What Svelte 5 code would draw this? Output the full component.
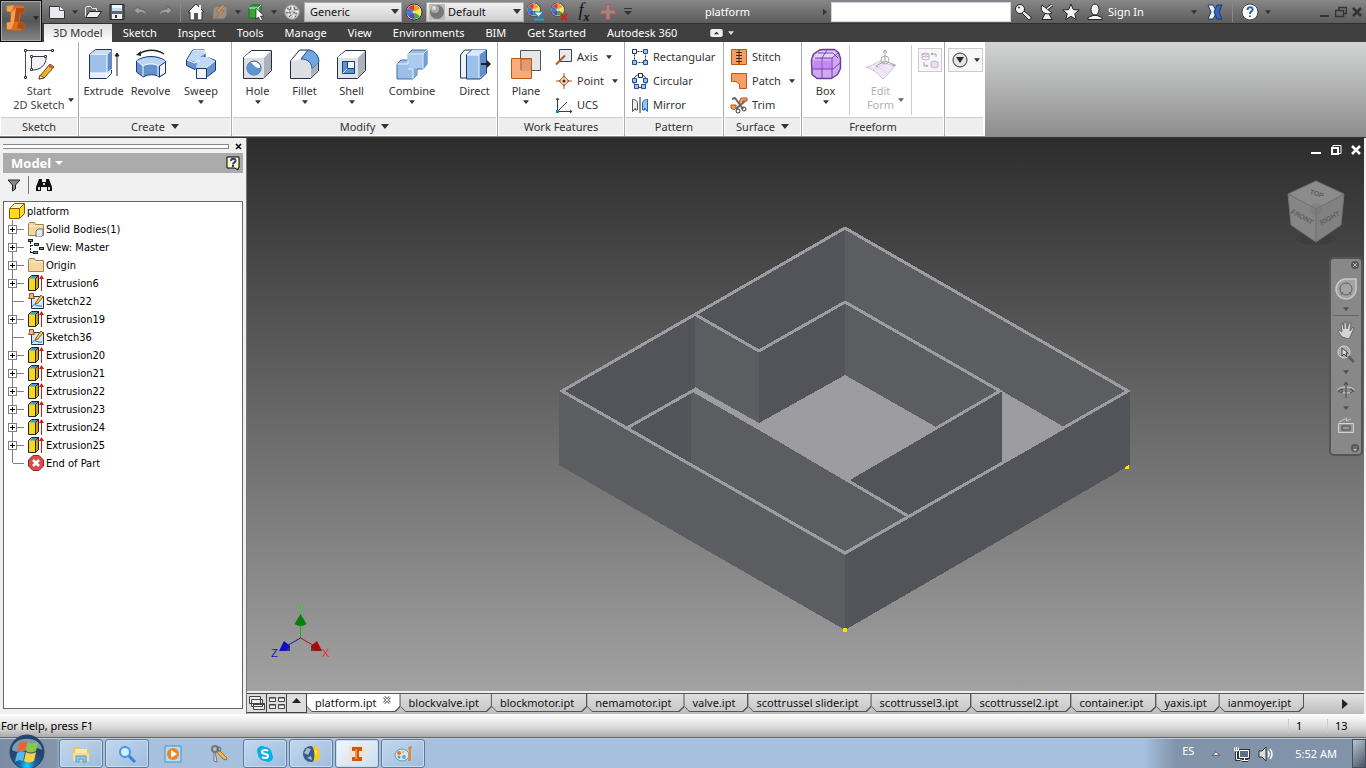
<script lang="ts">
  const menuTabs = ['3D Model', 'Sketch', 'Inspect', 'Tools', 'Manage', 'View', 'Environments', 'BIM', 'Get Started', 'Autodesk 360'];
  const documents = [
    'platform.ipt', 'blockvalve.ipt', 'blockmotor.ipt', 'nemamotor.ipt', 'valve.ipt', 'scottrussel slider.ipt',
    'scottrussel3.ipt', 'scottrussel2.ipt', 'container.ipt', 'yaxis.ipt', 'ianmoyer.ipt',
  ];
  const treeItems = [
    { icon: 'bodies', label: 'Solid Bodies(1)', expandable: true },
    { icon: 'views', label: 'View: Master', expandable: true },
    { icon: 'folder', label: 'Origin', expandable: true },
    { icon: 'extrusion', label: 'Extrusion6', expandable: true },
    { icon: 'sketchNode', label: 'Sketch22', expandable: false },
    { icon: 'extrusion', label: 'Extrusion19', expandable: true },
    { icon: 'sketchNode', label: 'Sketch36', expandable: false },
    { icon: 'extrusion', label: 'Extrusion20', expandable: true },
    { icon: 'extrusion', label: 'Extrusion21', expandable: true },
    { icon: 'extrusion', label: 'Extrusion22', expandable: true },
    { icon: 'extrusion', label: 'Extrusion23', expandable: true },
    { icon: 'extrusion', label: 'Extrusion24', expandable: true },
    { icon: 'extrusion', label: 'Extrusion25', expandable: true },
    { icon: 'end', label: 'End of Part', expandable: false },
  ];
  const tasks = [
    { icon: 'explorer', name: 'Explorer', open: true },
    { icon: 'search', name: 'Search', open: true },
    { icon: 'player', name: 'Media player', open: false },
    { icon: 'keys', name: 'Keys', open: false },
    { icon: 'skype', name: 'Skype', open: true },
    { icon: 'globe', name: 'Browser', open: true },
    { icon: 'inventor', name: 'Inventor', open: true },
    { icon: 'paint', name: 'Paint', open: true },
  ];

  let activeTab = $state('3D Model');
  let activeDocument = $state('platform.ipt');
</script>

{#snippet arrow(color = '#333')}
  <svg class="arrow" viewBox="0 0 8 5" width="6" height="4"><path d="M0 0h8L4 5z" fill={color} /></svg>
{/snippet}

{#snippet wheel()}
  <circle cx="9" cy="9" r="8" fill="#eee" stroke="#333" />
  <path d="M9 9V2a7 7 0 0 1 6 4z" fill="#f2a11d" /><path d="M9 9l6-3a7 7 0 0 1 0 7z" fill="#f4ec45" />
  <path d="M9 9l6 4a7 7 0 0 1-6 3z" fill="#44a943" /><path d="M9 9v7a7 7 0 0 1-6-4z" fill="#6648b5" />
  <path d="M9 9l-6 4a7 7 0 0 1 0-8z" fill="#397fce" /><path d="M9 9L3 5a7 7 0 0 1 6-3z" fill="#dc3c2d" />
  <circle cx="9" cy="9" r="1.500" fill="#ddd" />
{/snippet}

{#snippet small(name: string)}
  <svg class="icon" viewBox="0 0 18 18" width="18" height="18" fill="none" stroke-linejoin="round" aria-hidden="true">
    {#if name === 'new'}
      <path d="M1.500 3.500h10l5 4v8h-15z" fill="#e8e9ed" stroke="#333" /><path d="M11.500 3.500v4h5" fill="#fff" stroke="#555" />
    {:else if name === 'open'}
      <path d="M1.500 14.500V5l1-1.500h4l2 2h4v3" stroke="#ececec" /><path d="M1.500 14.500l4-6h12l-4 6z" fill="#eee" stroke="#222" />
    {:else if name === 'save'}
      <path d="M2 1.500h14v15H2z" fill="#5c6470" stroke="#222" /><path d="M4 2h10v6H4z" fill="#b9ddf1" /><path d="M4 2h10v3H4z" fill="#f4f8fb" /><path d="M4 11h10v5H4z" fill="#eee" /><path d="M7 12h2v3H7z" fill="#333" />
    {:else if name === 'undo'}
      <path d="M7 3L2 7.500 7 12V9.500c4-.5 7 1 8 4C15 8 11 6 7 6z" fill="#a0a0a0" stroke="#666" />
    {:else if name === 'redo'}
      <path d="M11 3l5 4.500-5 4.500V9.500c-4-.5-7 1-8 4C3 8 7 6 11 6z" fill="#a0a0a0" stroke="#666" />
    {:else if name === 'home'}
      <path d="M1 9L9 1l8 8h-2v8H3V9z" fill="#f8f8f8" stroke="#333" /><path d="M7 10h4v7H7z" fill="#555" /><path d="M13 2v4" stroke="#eee" stroke-width="2" />
    {:else if name === 'update'}
      <path d="M2 6l3-3h11v9l-3 4H2z" fill="#958f88" stroke="#77726c" /><path d="M11 2L5 9h4l-5 7 9-8H9l5-6z" fill="#cf9763" stroke="#9c6c45" stroke-width=".7" />
    {:else if name === 'select'}
      <path d="M2 5l3-3h9v10l-3 3H2z" fill="#36a438" stroke="#17711d" /><path d="M2 5h9v10M11 5l3-3" stroke="#dff5dc" /><path d="M9 5v11l2.500-2 2 4 2-1-2-4H17z" fill="#fff" stroke="#222" stroke-width=".7" />
    {:else if name === 'material'}
      <circle cx="9" cy="9" r="7.500" fill="#c9c9c9" stroke="#8d8d8d" /><path d="M4 5l3 2 1-3m3 0l1 3 3-1M3 10l4-1 1 4m2-4l4 2M6 14l2-2m3 3l2-2" stroke="#666" /><path d="M3 7l3 2m3-6l1 4m2 1l4 1M5 12l3-1m2 1l1 3" stroke="#fff" />
    {:else if name === 'wheel'}
      {@render wheel()}
    {:else if name === 'adjust'}
      <g transform="translate(-1 -1) scale(.85)">{@render wheel()}</g><path d="M7 9h9l-4.500 5z" fill="#fff" stroke="#198bd0" /><path d="M7 16.500h10" stroke="#23a4e5" stroke-width="2" />
    {:else if name === 'clear'}
      <g transform="translate(-1 -1) scale(.85)">{@render wheel()}</g><path d="M10 11l6 6m0-6l-6 6" stroke="#e11b14" stroke-width="2" />
    {:else if name === 'plus'}
      <path d="M7 1.500h4V7h5.500v4H11v5.500H7V11H1.500V7H7z" fill="#9d8581" stroke="#b05a4e" />
    {:else if name === 'key'}
      <path d="M7 9l8 8 2-1v-2L9 7z" fill="#eee" stroke="#222" /><circle cx="6" cy="6" r="4.500" fill="#f4f4f4" stroke="#222" /><circle cx="5" cy="4.500" r="1" fill="#333" />
    {:else if name === 'dish'}
      <path d="M8 9l-4 7.500h10L10 9" fill="#eee" stroke="#222" /><path d="M4 2c-3 6 3 11 10 8z" fill="#f4f4f4" stroke="#222" /><path d="M9 6l5-4" stroke="#222" stroke-width="3" /><path d="M9 6l5-4" stroke="#fff" stroke-width="1.500" />
    {:else if name === 'star'}
      <path d="M9 1l2.300 5.600 6 .4-4.600 3.800 1.600 5.800L9 13.300l-5.300 3.300 1.600-5.800L.7 7l6-.4z" fill="#f4f4f4" stroke="#222" />
    {:else if name === 'person'}
      <path d="M2 16.500v-2l5-2h4l5 2v2z" fill="#f4f4f4" stroke="#222" /><ellipse cx="9" cy="6.500" rx="4" ry="5.500" fill="#f4f4f4" stroke="#222" />
    {:else if name === 'exchange'}
      <path d="M2 2h5l4 7-4 7H2l3-7z" fill="#e8f0fc" stroke="#173a74" /><path d="M16 2h-5L8 9l3 7h5l-3-7z" fill="#3c64b2" stroke="#173a74" />
    {:else if name === 'help'}
      <circle cx="9" cy="9" r="8" fill="#fff" stroke="#444" /><path d="M6.500 7c0-4 6-3.500 5 0-.5 1.500-2.500 1.500-2.500 4M9 12.500V14" stroke="#1a65b5" stroke-width="2" />
    {:else if name === 'axis'}
      <path d="M4.500 1.500h12v12h-12z" fill="#e8e9ec" stroke="#3c4353" /><path d="M1 16.500l9-9" stroke="#a75e22" stroke-width="2" />
    {:else if name === 'point'}
      <path d="M9 4l5 5-5 5-5-5z" fill="#f9d1ab" stroke="#c2622a" /><path d="M9 1v5m0 6v5M1 9h5m6 0h5" stroke="#b34e1a" /><circle cx="9" cy="9" r="1.500" fill="#333" />
    {:else if name === 'ucs'}
      <path d="M2.500 2v13.500H17M1 4l1.500-2L4 4M15 14l2 1.500-2 1.500M3 15l9-9" stroke="#3b3f48" /><path d="M1 14h3v3H1z" fill="#1686c5" />
    {:else if name === 'rectangular'}
      <path d="M3.500 3.500h11v11h-11z" stroke="#333" stroke-dasharray="2 1" /><path d="M1.500 1.500h4v4h-4z" fill="#fff" stroke="#152e63" /><path d="M12.500 1.500h4v4h-4zM1.500 12.500h4v4h-4zM12.500 12.500h4v4h-4z" fill="#9fc5ef" stroke="#1c4b99" />
    {:else if name === 'circular'}
      <circle cx="9" cy="9" r="6.500" stroke="#333" /><path d="M7.500 1.500h4v4h-4z" fill="#fff" stroke="#152e63" /><path d="M1.500 6.500h4v4h-4zM12.500 6.500h4v4h-4zM3.500 12.500h4v4h-4zM10.500 12.500h4v4h-4z" fill="#9fc5ef" stroke="#1c4b99" />
    {:else if name === 'mirror'}
      <path d="M1.500 15.500v-12c3 0 5 1 5 4.500v6h-2v-2z" fill="#eee" stroke="#555" /><path d="M16.500 15.500v-12c-3 0-5 1-5 4.500v6h2v-2z" fill="#8fc6ee" stroke="#2365ac" /><path d="M9 1v16" stroke="#222" />
    {:else if name === 'stitch'}
      <path d="M1.500 1.500h15v15h-15z" fill="#f3a163" stroke="#bd561d" /><path d="M9 2v14M6 4.500h6m-6 3h6m-6 3h6m-6 3h6" stroke="#4b2b1d" />
    {:else if name === 'patch'}
      <path d="M1.500 1.500h15v15h-7V12L6 9.500H1.500z" fill="#f3a163" stroke="#bd561d" />
    {:else if name === 'trim'}
      <path d="M2 3l3-1 8 11M15 5L6 13" stroke="#666" stroke-width="2" /><path d="M9 6l2-4h6v3h-4l-2 4zM1 9h5v3l-2 2-3-2z" fill="#f0a067" stroke="#b55322" /><circle cx="8" cy="15" r="2" stroke="#333" /><circle cx="14" cy="13" r="2" stroke="#333" />
    {:else if name === 'convert'}
      <g opacity=".5"><path d="M1 3l3-1 4 1v5l-3 1-4-1zm0 0l4 1 3-1M1 5l4 1 3-1" stroke="#936fae" /><path d="M10 11l3-1 4 1v5l-3 1-4-1z" fill="#dcc8ed" stroke="#936fae" /><path d="M10 3h5v3m-5-3l2-1m-2 1l2 1M3 11v4h4m0 0l-2-1" stroke="#555" /></g>
    {:else if name === 'down'}
      <circle cx="9" cy="9" r="7" fill="#e4e5e6" stroke="#333" /><path d="M5 6h8l-4 6z" fill="#25272b" />
    {/if}
  </svg>
{/snippet}

{#snippet large(name: string)}
  <svg class="large-icon" viewBox="0 0 32 32" width="32" height="32" fill="none" stroke-linejoin="round" aria-hidden="true">
    {#if name === 'sketch'}
      <path d="M2.500 30V2.500H30" stroke="#4b4b4b" /><path d="M8.500 22V8.500H23c1 8-6 14-14 13.500" fill="#f2f3f5" stroke="#363c4d" />
      <path d="M1.500 1.500h2v2h-2zm27 0h2v2h-2zM1.500 28.500h2v2h-2zm6-21h2v2h-2zm14 0h2v2h-2zM7.500 20.500h2v2h-2z" fill="#fff" stroke="#34394a" /><path d="M17 28L27 16l4 3-10 11-5 1z" fill="#f4b322" stroke="#5f4a28" /><path d="M17 27l4 3-5 1z" fill="#ffe7c2" stroke="#5f4a28" /><path d="M27 16l4 3-2 2-4-3z" fill="#c7594a" />
    {:else if name === 'extrude'}
      <path d="M1.500 6.500l6-5h16v24l-5 5h-17z" fill="#e8eef8" stroke="#183566" /><path d="M2 7h17v18H2z" fill="#9dc1ea" /><path d="M19 7l5-5v19l-5 5z" fill="#5f8bc9" /><path d="M2 6l6-4h15l-4 4z" fill="#c8dcf3" /><path d="M2 25h17l5-4M19 6v24" stroke="#fff" /><path d="M29 28V6m-2 2l2-3 2 3z" fill="#222" stroke="#222" />
    {:else if name === 'revolve'}
      <path d="M4 6C11 1 22 1 29 6" stroke="#222" stroke-width="1.500" /><path d="M1 7l5-4v5z" fill="#222" /><path d="M1.500 13C9 7 23 7 30.500 13v12l-6 4c-4-3-12-3-16 0l-7-5z" fill="#6592cd" stroke="#173d7e" /><path d="M2 13C10 8 22 8 30 13l-7 5c-4-2-11-2-15 0z" fill="#bad5f4" /><path d="M2 13l6 5c4-3 12-3 15 0l7-5M8 18v10m15-10v10" stroke="#f4f9ff" /><path d="M24.500 18l6-4v11l-6 4z" fill="#f5f6f8" stroke="#173d7e" />
    {:else if name === 'sweep'}
      <path d="M1.500 12L8 1.500h11l1 4v4h3l7.500 3v10l-8 6H12v-9l-2 2-8.500-4z" fill="#6793cf" stroke="#183b78" /><path d="M2 12L8 2h11l1 4-5 3h8l7 4-9 7H11l1-5-4-2z" fill="#c0d9f5" /><path d="M2 12l8 3 2-2h3M8 2h11l1 4M21 20l9-7" stroke="#f4f8ff" /><path d="M11.500 20.500h10v10h-10z" fill="#f1f2f4" stroke="#183b78" />
    {:else if name === 'hole'}
      <path d="M1.500 9.500l8-7h20v20l-8 8h-20z" fill="#dedfe2" stroke="#202f4d" /><path d="M2 9l8-6h19l-7 7H2z" fill="#fff" /><path d="M22 10l7-7v19l-7 8z" fill="#adb0b6" /><circle cx="12" cy="20" r="7" fill="#fff" stroke="#1f4a8f" /><path d="M8 14c3 1 5 7 11 6-1 8-10 9-13 4-2-4-1-8 2-10z" fill="#5d93d3" />
    {:else if name === 'fillet'}
      <path d="M1.500 13l9-11h8c7 0 11 6 11 12v9l-8 7.500h-20z" fill="#dddfe3" stroke="#202f4d" /><path d="M2 13l9-10h7l-7 8-8 2z" fill="#fff" /><path d="M12 11l7-9c6 0 11 5 11 12l-7 7c0-6-4-10-11-10z" fill="#72a7e2" stroke="#1d57a2" /><path d="M22 22l7-7v7l-7 7z" fill="#aeb1b8" />
    {:else if name === 'shell'}
      <path d="M1.500 9.500l8-7h20v20l-8 8h-20z" fill="#e2e3e6" stroke="#202f4d" /><path d="M2 9l8-6h19l-7 7H2z" fill="#fff" /><path d="M22 10l7-7v19l-7 8z" fill="#aeb1b7" /><path d="M6.500 13.500h12v12h-12z" fill="#5c95d8" stroke="#173d7e" /><path d="M11.500 13.500h7v7h-7z" fill="#eff6ff" stroke="#173d7e" /><path d="M7 25l4-4" stroke="#fff" />
    {:else if name === 'combine'}
      <path d="M12 6l4-4h15v14l-4 5h-6v6l-4 4H1V16l4-4h7z" fill="#9dbfe5" stroke="#426fac" /><path d="M12 21h9v6l-4 4V21z" fill="#7ea9da" /><path d="M27 6l4-4v14l-4 5z" fill="#6f9fd5" /><path d="M12 6h15v15M27 6l4-4M1 16h11V6M12 21h5v10" stroke="#eaf3fd" /><path d="M13 7h13v13H13z" fill="#aacbf0" />
    {:else if name === 'direct'}
      <path d="M1.500 7l4-5h8v24l-5 4h-7z" fill="#f0f1f3" stroke="#233757" /><path d="M7.500 7l5-5h15v23l-6 6h-14z" fill="#9ac1ea" stroke="#183e80" /><path d="M20 7l7-5v23l-7 5z" fill="#638fcc" /><path d="M8 7l5-5h14l-7 5z" fill="#d8e8fb" /><path d="M20 7v23M8 7h12" stroke="#f4f9ff" /><path d="M22 15h6v-3l4 4-4 4v-3h-6z" fill="#222" />
    {:else if name === 'plane'}
      <path d="M10.500 2.500h20v20h-20z" fill="#e5e6e8" stroke="#4e535d" /><path d="M1.500 10.500h20v20h-20z" fill="#f9a267" fill-opacity=".9" stroke="#b8561b" /><path d="M11 11h10v11H11z" fill="#dc9c75" /><path d="M11 22V11h10" stroke="#a6653d" />
    {:else if name === 'box'}
      <path d="M1.500 12l2-6 6-4 4-.5h11l4 3 2 6v10l-3 6-6 4H7l-5-4z" fill="#d2a5f7" stroke="#644390" stroke-width="1.500" /><path d="M2 12l3-5 6-4h13l4 3-5 4H6z" fill="#e6cffb" /><path d="M4 13h7v8H3zm9 0h8v8h-8z" fill="#c388f5" /><path d="M17 2l-5 8v20M2 21h21l7-6M22 10v20M5 10h17l6-5M8 5h15l5 5" stroke="#714aa0" />
    {:else if name === 'form'}
      <g opacity=".4"><path d="M1 19c7-1 10-5 15-6 6 3 9 4 15 4-6 6-8 10-13 14-5-5-8-9-17-12z" fill="#dac3ef" stroke="#81669b" /><path d="M9 16l13 9M7 22l16-8" stroke="#b79ed0" /><path d="M20 14V2l-2 3m2-3l2 3M20 13l10 4-3 1M20 13l-9 5 2 1" stroke="#222" /><circle cx="20" cy="12" r="4" stroke="#333" /></g>
    {/if}
  </svg>
{/snippet}

{#snippet node(name: string)}
  <svg viewBox="0 0 16 16" width="16" height="16" fill="none" stroke-linejoin="round" aria-hidden="true">
    {#if name === 'part'}
      <path d="M.5 5.500l5-5h10v10l-5 5H.5z" fill="#ffdd18" stroke="#95500d" /><path d="M1.500 5L6 1h8.500L11 5z" fill="#fff7c0" /><path d="M10.500 15V5.500H1m9.500 0l5-5" stroke="#95500d" />
    {:else if name === 'bodies' || name === 'folder'}
      <path d="M.5 14.500v-12l1-1h5l1 2h8v11z" fill="#f4d69f" stroke="#a08252" /><path d="M1 5h14" stroke="#fff0cc" />
      {#if name === 'bodies'}
        <path d="M8 10l2-2h5v6l-2 2H8z" fill="#e5e8ee" stroke="#68717e" />
      {/if}
    {:else if name === 'views'}
      <path d="M2.500 3v11M3 6.500h4m-4 7h4" stroke="#222" stroke-dasharray="2 1" /><path d="M0 1.500h5M6 5.500h5M5 13.500h5M11 9.500h5" stroke="#222" stroke-width="3" /><path d="M1 1.500h3M7 5.500h3M6 13.500h3M12 9.500h3" stroke="#60a5cf" />
    {:else if name === 'extrusion'}
      <path d="M.5 3.500l3-3h7v12l-3 3h-7z" fill="#f7d91b" stroke="#222" /><path d="M1 3.500L4 1h6.500L8 3.500z" fill="#4a98d0" /><path d="M7.500 15.500v-12l3-3v12z" fill="#c9a016" stroke="#222" /><path d="M13 2h1v14h-1z" fill="#dc1717" /><path d="M11 4l2.500-4L16 4z" fill="#dc1717" />
    {:else if name === 'sketchNode'}
      <path d="M3.500 3.500h12v12h-12z" fill="#d8e7f4" stroke="#243349" /><path d="M1.500.5h4v3l1 2h-6l1-2z" fill="#f6b684" stroke="#9d4a23" /><path d="M8 9l5-7 2 2-5 6-3 1z" fill="#f6c842" stroke="#8a6420" /><path d="M4 14c2-5 5 0 10-1" stroke="#276eae" />
    {:else}
      <path d="M5 .5h6L15.500 5v6L11 15.500H5L.5 11V5z" fill="#de4b46" stroke="#76312d" /><path d="M5 5l6 6m0-6l-6 6" stroke="#fff" stroke-width="2.500" />
    {/if}
  </svg>
{/snippet}

{#snippet tool(icon: string, label: string, width: string, menu = false)}
  <button class="tool {width}">{@render large(icon)}<span>{label}</span>{#if menu}{@render arrow()}{/if}</button>
{/snippet}

{#snippet command(icon: string, label: string, menu = false)}
  <button class="command">{@render small(icon)}<span>{label}</span>{#if menu}{@render arrow()}{/if}</button>
{/snippet}

<div class="desktop">
  <header class="app-header">
    <button class="app-button" aria-label="Application menu">
      <svg viewBox="0 0 24 30" width="22" height="28"><path d="M2 2l8-1 11 1v7l-4 1-1 9 5 1v8l-10 1-9-1v-8l4-1V9L2 8z" fill="#d96c1f" /><path d="M2 2l8-1-3 7H2zM7 9l5-5-1 15H6zM2 20l8-1-3 8H2z" fill="#f4a04c" /><path d="M12 4h9v5l-5 1-1 9h-5zM15 19l6 1v8l-8-2z" fill="#b34b12" /></svg>
      {@render arrow('#222')}
    </button>
    <div class="title-bar">
      <button class="quick" aria-label="New">{@render small('new')}</button>
      <button class="more" aria-label="New options">{@render arrow()}</button>
      <button class="quick" aria-label="Open">{@render small('open')}</button>
      <button class="quick" aria-label="Save">{@render small('save')}</button>
      <button class="quick" aria-label="Undo">{@render small('undo')}</button>
      <button class="quick" aria-label="Redo">{@render small('redo')}</button>
      <span class="bar-divider"></span>
      <button class="quick" aria-label="Home">{@render small('home')}</button>
      <button class="quick" aria-label="Update">{@render small('update')}</button>
      <button class="more" aria-label="Update options">{@render arrow()}</button>
      <button class="quick" aria-label="Select">{@render small('select')}</button>
      <button class="more" aria-label="Select options">{@render arrow()}</button>
      <button class="quick" aria-label="Material">{@render small('material')}</button>
      <div class="dropdown">
        <select aria-label="Material name"><option>Generic</option></select>
        <svg viewBox="0 0 8 5" width="8" height="5"><path d="M0 0h8L4 5z" fill="#333" /></svg>
      </div>
      <button class="quick" aria-label="Appearance">{@render small('wheel')}</button>
      <div class="dropdown">
        <svg viewBox="0 0 16 16" width="16" height="16"><path d="M0 0h16v16H0z" fill="#bbb" /><circle cx="8" cy="8" r="7" fill="#777" /><circle cx="6" cy="5" r="4" fill="#aaa" /><circle cx="5" cy="4" r="2" fill="#ddd" /></svg>
        <select aria-label="Appearance name"><option>Default</option></select>
        <svg viewBox="0 0 8 5" width="8" height="5"><path d="M0 0h8L4 5z" fill="#333" /></svg>
      </div>
      <button class="quick" aria-label="Adjust appearance">{@render small('adjust')}</button>
      <button class="quick" aria-label="Clear appearance">{@render small('clear')}</button>
      <button class="quick formula" aria-label="Parameters"><i>f<sub>x</sub></i></button>
      <button class="quick" aria-label="Add">{@render small('plus')}</button>
      <button class="more last" aria-label="Customize"><svg viewBox="0 0 8 7" width="8" height="7"><path d="M0 0h8v1H0zM0 3h8L4 7z" fill="#333" /></svg></button>
      <span class="document-title">platform</span>
      <button class="more" aria-label="Expand search"><svg viewBox="0 0 5 8" width="4" height="8"><path d="M0 0v8l5-4z" fill="#333" /></svg></button>
      <input class="search" type="search" aria-label="Search help" />
      <button class="quick" aria-label="Subscription">{@render small('key')}</button>
      <button class="quick" aria-label="Communication">{@render small('dish')}</button>
      <button class="quick" aria-label="Favorites">{@render small('star')}</button>
      <button class="sign-in">{@render small('person')}<span>Sign In</span>{@render arrow()}</button>
      <button class="quick" aria-label="Exchange">{@render small('exchange')}</button>
      <span class="bar-divider spaced"></span>
      <button class="quick" aria-label="Help">{@render small('help')}</button>
      <button class="more" aria-label="Help options">{@render arrow()}</button>
      <div class="window-buttons">
        <button aria-label="Minimize"><svg viewBox="0 0 12 12" width="12" height="12"><path d="M1 9h9v2H1z" fill="#333" /></svg></button>
        <button aria-label="Restore"><svg viewBox="0 0 12 12" width="12" height="12" fill="none" stroke="#333"><path d="M4 4V1.500h7.500v6H9" stroke-width="1.500" /><path d="M.5 4.500h8v6h-8z" stroke-width="1.500" /></svg></button>
        <button aria-label="Close"><svg viewBox="0 0 12 12" width="12" height="12"><path d="M2 2l8 8m0-8l-8 8" stroke="#333" stroke-width="2.500" /></svg></button>
      </div>
    </div>
    <nav class="menu-tabs">
      {#each menuTabs as tab}
        <button class:active={activeTab === tab} onclick={() => (activeTab = tab)}>{tab}</button>
      {/each}
      <button class="collapse" aria-label="Collapse ribbon">
        <svg viewBox="0 0 14 9" width="13" height="8"><rect width="14" height="9" rx="2" fill="#eee" /><path d="M4 6h6L7 3z" fill="#333" /></svg>
        {@render arrow('#ddd')}
      </button>
    </nav>
  </header>

  <div class="ribbon">
    <section class="panel sketch-panel">
      <div class="panel-body">
        <button class="tool split">{@render large('sketch')}<span>Start<br />2D Sketch</span>{@render arrow()}</button>
      </div>
      <footer>Sketch</footer>
    </section>
    <section class="panel create-panel">
      <div class="panel-body">
        {@render tool('extrude', 'Extrude', 'medium')}
        {@render tool('revolve', 'Revolve', 'medium')}
        {@render tool('sweep', 'Sweep', 'wide', true)}
      </div>
      <footer>Create {@render arrow()}</footer>
    </section>
    <section class="panel modify-panel">
      <div class="panel-body">
        {@render tool('hole', 'Hole', 'medium', true)}
        {@render tool('fillet', 'Fillet', 'medium', true)}
        {@render tool('shell', 'Shell', 'medium', true)}
        {@render tool('combine', 'Combine', 'widest', true)}
        <span class="divider"></span>
        {@render tool('direct', 'Direct', 'medium')}
      </div>
      <footer>Modify {@render arrow()}</footer>
    </section>
    <section class="panel work-panel">
      <div class="panel-body">
        {@render tool('plane', 'Plane', 'wide', true)}
        <div class="commands">
          {@render command('axis', 'Axis', true)}
          {@render command('point', 'Point', true)}
          {@render command('ucs', 'UCS')}
        </div>
      </div>
      <footer>Work Features</footer>
    </section>
    <section class="panel pattern-panel">
      <div class="panel-body">
        <div class="commands inset">
          {@render command('rectangular', 'Rectangular')}
          {@render command('circular', 'Circular')}
          {@render command('mirror', 'Mirror')}
        </div>
      </div>
      <footer>Pattern</footer>
    </section>
    <section class="panel surface-panel">
      <div class="panel-body">
        <div class="commands inset">
          {@render command('stitch', 'Stitch')}
          {@render command('patch', 'Patch', true)}
          {@render command('trim', 'Trim')}
        </div>
      </div>
      <footer>Surface {@render arrow()}</footer>
    </section>
    <section class="panel freeform-panel">
      <div class="panel-body">
        {@render tool('box', 'Box', 'medium', true)}
        <span class="divider"></span>
        <button class="tool split" disabled>{@render large('form')}<span>Edit<br />Form</span>{@render arrow('#666')}</button>
        <span class="divider"></span>
        <button class="boxed" disabled aria-label="Convert">{@render small('convert')}</button>
      </div>
      <footer>Freeform</footer>
    </section>
    <section class="panel extra-panel">
      <div class="panel-body"><button class="boxed" aria-label="Panel display">{@render small('down')}{@render arrow()}</button></div>
      <footer></footer>
    </section>
  </div>

  <main class="workspace">
    <aside class="browser">
      <div class="grip"><span></span><button aria-label="Close browser"><svg viewBox="0 0 7 7" width="7" height="7"><path d="M1 1l5 5m0-5L1 6" stroke="#000" stroke-width="1.500" /></svg></button></div>
      <div class="browser-title">
        <button>Model <svg viewBox="0 0 8 4" width="8" height="4"><path d="M0 0h8L4 4z" fill="#fff" /></svg></button>
        <button aria-label="Browser help"><svg viewBox="0 0 14 15" width="14" height="15"><path d="M1 1h12v11h-1v2l-3-2H1z" fill="#fffbc0" stroke="#000" /><path d="M5 5c0-3 5-3 4.500 0C9 7 7 6.500 7 8.500M7 9v2" fill="none" stroke="#17429b" stroke-width="2" /></svg></button>
      </div>
      <div class="browser-tools">
        <button aria-label="Filter"><svg viewBox="0 0 14 13" width="14" height="13"><path d="M1 1h12L8.500 6v4l-3 2V6z" fill="#888" stroke="#222" /></svg></button>
        <span></span>
        <button aria-label="Find"><svg viewBox="0 0 16 14" width="16" height="14"><path d="M3 1h3v3h4V1h3l3 8v4h-5V9H5v4H0V9z" fill="#111" /><path d="M2 9h2v3H2zM12 9h2v3h-2zM7 5h2v2H7z" fill="#ddd" /></svg></button>
      </div>
      <ul class="tree">
        <li class="root">{@render node('part')}<span>platform</span></li>
        {#each treeItems as item, i}
          <li>
            <svg class="branch" viewBox="0 0 24 18" width="24" height="18" fill="none" shape-rendering="crispEdges">
              <path d="M8.500 0v{i === treeItems.length - 1 ? 9 : 18}M8.500 9.500H20" stroke="#808080" />
              {#if item.expandable}
                <path d="M4.500 5.500h8v8h-8z" fill="#fff" stroke="#808080" /><path d="M6 9.500h5M8.500 7v5" stroke="#000" />
              {/if}
            </svg>
            {@render node(item.icon)}
            <span>{item.label}</span>
          </li>
        {/each}
      </ul>
    </aside>

    <section class="document-area">
      <div class="canvas">
        <svg class="model" viewBox="247 138 1117 553" shape-rendering="crispEdges" role="img" aria-label="platform model">
          <path d="M559 391l286 164v75L559 465z" fill="#5c5d61" />
          <path d="M1130 391L845 555v75l285-165z" fill="#535459" />
          <path d="M845 228L562 391l283 163z" fill="#535459" />
          <path d="M845 228l283 163-64 37-62-37-157-89z" fill="#5c5d61" />
          <path d="M695 315l64 36v72l-64-35z" fill="#5c5d61" />
          <path d="M845 302l-86 49v72l86-48z" fill="#535459" />
          <path d="M845 302l155 89-64 37-91-53z" fill="#5c5d61" />
          <path d="M845 375l91 52-91 54-154-89 4-5 64 36z" fill="#9d9ca0" />
          <path d="M1002 391v73l62-37z" fill="#9d9ca0" />
          <path d="M1002 391v73l-94 53-61-37z" fill="#535459" />
          <path d="M627 428l64-37v74z" fill="#535459" />
          <path d="M691 391l217 125-63 38-154-89z" fill="#5c5d61" />
          <path d="M845 228l283 163-283 162-283-162zM696 315l63 36 86-49 155 89-153 89M627 428l67-38 214 126" fill="none" stroke="#9d9ca0" stroke-width="3" />
          <path d="M843 628h4v4h-4zM1125 467l4-2v4h-4z" fill="#ffe100" />
        </svg>

        <div class="view-buttons">
          <button aria-label="Minimize document"><svg viewBox="0 0 12 12" width="12" height="12"><path d="M1 8h10v2H1z" fill="#fff" /></svg></button>
          <button aria-label="Restore document"><svg viewBox="0 0 12 12" width="12" height="12" fill="none" stroke="#fff"><path d="M3 3V1.500h8v8H9" /><path d="M2 4h6v6H2z" stroke-width="2" /></svg></button>
          <button aria-label="Close document"><svg viewBox="0 0 12 12" width="12" height="12"><path d="M2 2l8 8m0-8l-8 8" stroke="#fff" stroke-width="2.500" /></svg></button>
        </div>

        <svg class="view-cube" viewBox="0 0 60 70" width="60" height="70">
          <ellipse cx="30" cy="61" rx="20" ry="6" fill="#222" opacity=".15" />
          <path d="M30 3l28 13-28 15L2 16z" fill="#8c8c8c" stroke="#727272" /><path d="M2 16l28 15v33L5 47z" fill="#868686" stroke="#727272" /><path d="M58 16L30 31v33l25-17z" fill="#818181" stroke="#727272" />
          <circle cx="30" cy="31" r="6" fill="#777" opacity=".5" />
          <g font-family="Liberation Sans, sans-serif" font-size="7" font-weight="bold" fill="#5f5f5f" text-anchor="middle"><text transform="translate(30 18) rotate(18)">TOP</text><text transform="translate(15 41) rotate(28)">FRONT</text><text transform="translate(45 42) rotate(-29)">RIGHT</text></g>
        </svg>

        <div class="nav-bar">
          <button class="corner" aria-label="Close navigation"><svg viewBox="0 0 8 8" width="8" height="8"><circle cx="4" cy="4" r="4" fill="#555" /><path d="M2 2l4 4m0-4L2 6" stroke="#bbb" /></svg></button>
          <button class="steering" aria-label="Steering wheel"><svg viewBox="0 0 22 22" width="22" height="22" fill="none" stroke="#c8c8c8"><path d="M11 1h10v10A10 10 0 1 1 11 1z" fill="#a3a3a3" stroke-width="1.500" /><circle cx="11" cy="11" r="6" stroke="#5f5f5f" /><path d="M6 17l2-3m8 3l-2-3" stroke="#5f5f5f" /></svg></button>
          {@render arrow('#4f4f4f')}
          <hr />
          <button aria-label="Pan"><svg viewBox="0 0 18 18" width="18" height="18"><path d="M5 16L1 10l1-1 3 2-1-8h2l1 5V1h2l1 7 2-6h2l-1 8 3-4 1 1-3 7-2 4z" fill="#d4d4d4" stroke="#555" stroke-width=".8" /></svg></button>
          <button aria-label="Zoom"><svg viewBox="0 0 18 18" width="18" height="18" fill="none"><path d="M11 11l6 6" stroke="#606060" stroke-width="3" /><circle cx="7" cy="7" r="6" fill="#aaa" stroke="#d3d3d3" /><path d="M5 3v8l2-2 3 3-1-4h2z" fill="#ddd" stroke="#444" /></svg></button>
          {@render arrow('#4f4f4f')}
          <button aria-label="Orbit"><svg viewBox="0 0 18 18" width="18" height="18" fill="none" stroke="#444"><ellipse cx="9" cy="9" rx="8" ry="3" stroke="#d0d0d0" /><path d="M9 17V1L7 4m2-3l2 3M1 10l4-2v4zm12-2l4 2-4 2" /></svg></button>
          {@render arrow('#4f4f4f')}
          <button aria-label="Look at"><svg viewBox="0 0 18 18" width="18" height="18" fill="none"><path d="M1.500 6.500h15v9h-15z" fill="#989898" stroke="#d3d3d3" /><path d="M5 9h8v4H5z" stroke="#444" /><path d="M2 5l8-4-1 3 5-2" stroke="#c4c4c4" /></svg></button>
          <button class="corner" aria-label="Navigation options"><svg viewBox="0 0 8 8" width="8" height="8"><circle cx="4" cy="4" r="4" fill="#555" /><path d="M2 3h4M2 5h4L4 7z" fill="#bbb" stroke="#bbb" stroke-width=".5" /></svg></button>
        </div>

        <svg class="triad" viewBox="0 0 62 56" width="62" height="56" font-family="Liberation Sans, sans-serif" font-size="11">
          <path d="M30.500 34V12" stroke="#11b711" /><path d="M30.500 34l-14 8" stroke="#1010d4" /><path d="M30.500 34l14 8" stroke="#b41010" />
          <path d="M30.500 10l6 10q-6 4-12 0z" fill="#087d0c" /><path d="M9 47l5-10 6 5v5z" fill="#1010c2" /><path d="M52 47l-5-10-6 5v5z" fill="#a90808" /><path d="M15 47l5-4v4z" fill="#283c65" /><path d="M41 47v-4l5 4z" fill="#6b3a1c" />
          <text x="27" y="9" fill="#28d228">Y</text><text x="1" y="53" fill="#1010d4">Z</text><text x="52" y="53" fill="#ef2a2a">X</text>
        </svg>
      </div>

      <div class="document-tabs">
        <button class="layout" aria-label="Cascade"><svg viewBox="0 0 16 16" width="16" height="16" fill="#eee" stroke="#444"><path d="M.5 1.500h11v7H.5zM2.500 4.500h11v7h-11zM4.500 8.500h11v6h-11z" /><path d="M4.500 9h11" stroke-width="2" /></svg></button>
        <button class="layout" aria-label="Tile"><svg viewBox="0 0 16 16" width="16" height="16" fill="#eee" stroke="#444"><path d="M.5 2.500h6v4h-6zM9.500 2.500h6v4h-6zM.5 9.500h6v4h-6zM9.500 9.500h6v4h-6z" /><path d="M1 3h5M10 3h5M1 10h5M10 10h5" /></svg></button>
        <button class="layout" aria-label="Scroll up"><svg class="scroll-up" viewBox="0 0 9 5" width="9" height="5"><path d="M0 5h9L4.500 0z" fill="#222" /></svg></button>
        <div class="tab-list">
          {#each documents as doc}
            <button class="document-tab" class:active={activeDocument === doc} onclick={() => (activeDocument = doc)}>
              <span>{doc}{#if activeDocument === doc}<svg viewBox="0 0 8 8" width="8" height="8"><path d="M1 1l6 6m0-6L1 7" stroke="#777" stroke-width="3" /><path d="M1 1l6 6m0-6L1 7" stroke="#fff" /></svg>{/if}</span>
            </button>
          {/each}
        </div>
        <button class="next" aria-label="Next documents"><svg viewBox="0 0 6 10" width="6" height="10"><path d="M0 0v10l6-5z" fill="#222" /></svg></button>
      </div>
    </section>
  </main>

  <div class="status-bar"><span>For Help, press F1</span><span class="count">1</span><span class="count">13</span></div>

  <footer class="taskbar">
    <button class="start" aria-label="Start">
      <svg viewBox="0 0 36 36" width="36" height="36"><defs><radialGradient id="orb" cx=".5" cy=".9"><stop stop-color="#18d5fb" /><stop offset=".45" stop-color="#1d67a5" /><stop offset="1" stop-color="#24466b" /></radialGradient></defs><circle cx="18" cy="18" r="17" fill="url(#orb)" stroke="#284662" /><path d="M3 16C4 1 32 1 33 16 25 10 12 22 3 16z" fill="#b6d2e7" opacity=".6" /><path d="M10 9c3-2 5-2 8-1l-2 9c-3-1-5-1-8 1z" fill="#ed622e" /><path d="M19 8c3 2 6 2 10 0l-2 9c-4 2-7 2-10 0z" fill="#8bc747" /><path d="M8 19c3-2 5-2 8-1l-2 9c-3-1-5-1-8 1z" fill="#5ab8ef" /><path d="M17 18c3 2 6 2 10 0l-2 9c-4 2-7 2-10 0z" fill="#fbd041" /></svg>
    </button>
    {#each tasks as task}
      <button class="task" class:open={task.open} class:current={task.icon === 'inventor'} aria-label={task.name}>
        <svg viewBox="0 0 18 18" width="18" height="18" fill="none">
          {#if task.icon === 'explorer'}
            <path d="M1 2h6l1 2h9v11H1z" fill="#edc752" /><path d="M3 4h12v8H3z" fill="#f8e9aa" /><path d="M1 8h16v8H1z" fill="#f5dd8c" /><path d="M4 17v-6h10v6h-3v-3H7v3z" fill="#8cc9ed" stroke="#579cc6" />
          {:else if task.icon === 'search'}
            <path d="M11 11l6 6" stroke="#3482da" stroke-width="3" /><circle cx="7" cy="7" r="5" fill="#d3edff" stroke="#4095ef" stroke-width="2" />
          {:else if task.icon === 'player'}
            <path d="M1 1h16v16H1z" fill="#b6dcf5" stroke="#4093ca" /><circle cx="9" cy="9" r="6" fill="#f4831d" /><path d="M7 5v8l6-4z" fill="#fff" />
          {:else if task.icon === 'keys'}
            <path d="M8 4l9 9-1 2-3-1-6-7z" fill="#f3b74e" stroke="#a76d24" /><path d="M5 6l2 11-3-1V7" fill="#ddd" stroke="#777" /><circle cx="5" cy="4" r="3" stroke="#777" stroke-width="2" /><circle cx="9" cy="4" r="2" stroke="#666" />
          {:else if task.icon === 'skype'}
            <circle cx="6" cy="6" r="5" fill="#08aeea" /><circle cx="12" cy="12" r="5" fill="#08aeea" /><circle cx="9" cy="9" r="7" fill="#08aeea" /><path d="M12 6c-2-2-6-1-6 1 0 3 6 1 6 4 0 3-5 2-6 1" stroke="#fff" stroke-width="2" />
          {:else if task.icon === 'globe'}
            <circle cx="9" cy="9" r="8" fill="#335a8c" /><path d="M10 1a8 8 0 0 1 1 16c2-5 2-11-1-16z" fill="#f5ca24" /><path d="M2 8l3-5 4 1-3 6zM5 13l4-2 1 4z" fill="#a9bccb" /><path d="M13 5l2 1-2 5z" fill="#f9e879" />
          {:else if task.icon === 'inventor'}
            <path d="M1 1h16v16H1z" fill="#f4e2d1" /><path d="M4 2h10v4h-3v6h3v4H4v-4h3V6H4z" fill="#c65a16" /><path d="M7 4h2v10H7z" fill="#f39338" />
          {:else}
            <ellipse cx="8" cy="10" rx="7" ry="6" fill="#d3e7f2" stroke="#7096ad" /><circle cx="5" cy="8" r="2" fill="#df7543" /><circle cx="9" cy="7" r="1.500" fill="#eccb41" /><circle cx="5" cy="12" r="1.500" fill="#55ae66" /><circle cx="10" cy="12" r="2" fill="#6aa5d9" /><path d="M14 16l1-10-1-4 4-1-1 5v10z" fill="#d98c41" />
          {/if}
        </svg>
      </button>
    {/each}
    <div class="tray">
      <span class="language">ES</span>
      <button aria-label="Hidden icons"><svg viewBox="0 0 9 5" width="8" height="5"><path d="M.5 4.500h8l-4-4z" fill="#fff" stroke="#444" /></svg></button>
      <button class="network" aria-label="Network"><svg viewBox="0 0 16 16" width="16" height="16" fill="none" stroke="#fff"><path d="M5.500 4.500h9v7h-9zM8 14.500h6M10.500 12v2M2.500 6v7.500H6" stroke="#333" stroke-width="3" /><path d="M5.500 4.500h9v7h-9z" fill="#5f6f82" /><path d="M8 14.500h6M10.500 12v2M2.500 6v7.500H6M.5 1.500v3h4v-3M2.500 1v4" /></svg></button>
      <button aria-label="Volume"><svg viewBox="0 0 16 16" width="16" height="16" fill="none"><path d="M1 5h3l4-4v14l-4-4H1z" fill="#ddd" stroke="#333" /><path d="M10 5q2 3 0 6m2-8q4 5 0 10" stroke="#fff" stroke-width="1.500" /></svg></button>
      <span class="clock">5:52 AM</span>
      <button class="show-desktop" aria-label="Show desktop"></button>
    </div>
  </footer>
</div>

<style>
  :global(body) {
    margin: 0;
    overflow: hidden;
  }

  .desktop {
    display: flex;
    flex-direction: column;
    height: 100vh;
    font: 11px/14px 'Noto Sans', 'Open Sans', sans-serif;
    color: #333;
    background: #f0f0f0;
  }

  .desktop * {
    box-sizing: border-box;
  }

  svg {
    flex-shrink: 0;
  }

  button {
    display: flex;
    align-items: center;
    justify-content: center;
    flex-shrink: 0;
    margin: 0;
    padding: 0;
    border: 0;
    background: none;
    color: inherit;
    font: inherit;
    white-space: nowrap;
  }

  .app-header {
    display: grid;
    grid-template: 24px 18px / 42px 1fr;
    background: #404040;
  }

  .app-button {
    grid-row: 1 / 3;
    gap: 6px;
    padding: 0 2px 6px 4px;
    border: 1px solid #111;
    box-shadow: inset 0 0 0 1px #aaa;
    background: linear-gradient(#777, #575757 50%, #858585);
  }

  .title-bar {
    display: flex;
    align-items: center;
    padding: 0 3px;
    border-bottom: 1px solid #303030;
    background: linear-gradient(#888, #707070 50%, #5d5d5d);
    color: #fff;
  }

  .quick {
    width: 24px;
    height: 22px;
  }

  .more {
    width: 12px;
    height: 22px;
  }

  .more.last {
    width: 16px;
  }

  .bar-divider {
    width: 1px;
    height: 20px;
    margin: 0 3px;
    background: #888;
  }

  .bar-divider.spaced {
    margin: 0 5px;
  }

  .dropdown {
    display: flex;
    align-items: center;
    width: 98px;
    height: 20px;
    padding: 0 2px;
    border: 1px solid #aaa;
    background: linear-gradient(#f0f0f0, #d0d0d0);
  }

  .dropdown select {
    flex: 1;
    min-width: 0;
    height: 18px;
    padding: 0 0 0 3px;
    border: 0;
    appearance: none;
    background: none;
    color: #111;
    font: inherit;
  }

  .formula {
    color: #111;
    font: 18px/18px 'Liberation Serif', serif;
  }

  .formula sub {
    font-size: 12px;
    font-weight: bold;
    line-height: 1;
  }

  .document-title {
    flex: 1;
    text-align: center;
  }

  .search {
    width: 180px;
    height: 20px;
    padding: 0 4px;
    border: 1px solid #ccd4dd;
    background: #fff;
    font: inherit;
  }

  .sign-in {
    gap: 4px;
    width: 120px;
    padding: 0 6px 0 3px;
  }

  .sign-in :global(.arrow) {
    margin-left: auto;
  }

  .window-buttons {
    display: flex;
    gap: 4px;
    margin-left: 45px;
  }

  .menu-tabs {
    display: flex;
    gap: 1px;
    padding-left: 2px;
    color: #fff;
  }

  .menu-tabs button {
    padding: 0 10px;
  }

  .menu-tabs .active {
    padding: 0 9px;
    background: linear-gradient(#ddd, #fff);
    color: #333;
  }

  .menu-tabs .collapse {
    gap: 5px;
    margin-left: 12px;
  }

  .ribbon {
    display: flex;
    height: 95px;
    border-bottom: 1px solid #888;
    background: linear-gradient(#d2d4d3, #8d8d8d);
  }

  .panel {
    display: flex;
    flex-direction: column;
    padding-bottom: 1px;
    border-right: 1px solid #aaa;
    background: #fff;
  }

  .panel-body {
    display: flex;
    flex: 1;
    padding-top: 6px;
  }

  .panel footer {
    display: flex;
    align-items: center;
    justify-content: center;
    gap: 6px;
    height: 18px;
    margin: 0 1px;
    border-top: 1px solid #ccc;
    background: #eee;
  }

  .panel footer .arrow {
    width: 8px;
    height: 5px;
  }

  .sketch-panel {
    width: 79px;
  }

  .create-panel {
    width: 153px;
  }

  .modify-panel {
    width: 266px;
  }

  .work-panel {
    width: 127px;
  }

  .pattern-panel {
    width: 99px;
  }

  .surface-panel {
    width: 78px;
  }

  .freeform-panel {
    width: 143px;
  }

  .extra-panel {
    width: 40px;
    border-right-color: #fff;
  }

  .create-panel .panel-body,
  .work-panel .panel-body {
    padding-left: 1px;
  }

  .modify-panel .panel-body {
    padding-left: 2px;
  }

  .tool {
    flex-direction: column;
    justify-content: flex-start;
    align-self: flex-start;
    gap: 4px;
  }

  .tool .arrow {
    margin-top: -2px;
  }

  .medium {
    width: 47px;
  }

  .wide {
    width: 54px;
  }

  .widest {
    width: 74px;
  }

  .split {
    position: relative;
    flex: 1;
    color: #444;
  }

  .split .arrow {
    position: absolute;
    right: 4px;
    bottom: 10px;
  }

  .split:disabled {
    color: #aeb5b3;
  }

  .freeform-panel .split .arrow {
    right: 7px;
  }

  .divider {
    width: 1px;
    margin: -3px 0 2px 2px;
    background: #ccc;
  }

  .freeform-panel .divider {
    margin-left: 0;
  }

  .commands {
    display: flex;
    flex-direction: column;
    padding-left: 2px;
    margin-top: -3px;
  }

  .commands.inset {
    padding-left: 6px;
  }

  .command {
    align-self: flex-start;
    gap: 4px;
    height: 24px;
  }

  .command .arrow {
    margin-left: 4px;
  }

  .boxed {
    gap: 5px;
    height: 24px;
    margin: 0 2px 0 6px;
    padding: 0 2px;
    border: 1px solid #ccc;
    background: #f7f7f7;
  }

  .extra-panel .boxed {
    width: 35px;
    margin-left: 3px;
  }

  .workspace {
    display: flex;
    flex: 1;
    min-height: 0;
    border-top: 1px solid #333;
  }

  .browser {
    display: flex;
    flex-direction: column;
    width: 247px;
    padding: 1px 3px 5px 3px;
    border-right: 1px solid #777;
    background: #f0f0f0;
  }

  .grip {
    display: flex;
    align-items: center;
    gap: 4px;
    height: 14px;
  }

  .grip span {
    flex: 1;
    height: 5px;
    border: solid #888;
    border-width: 1px 1px 1px 0;
    background: #fff;
  }

  .grip button {
    width: 10px;
  }

  .browser-title {
    display: flex;
    align-items: center;
    justify-content: space-between;
    height: 20px;
    padding: 0 3px 0 8px;
    background: #ababab;
    color: #fff;
    font-size: 13px;
    font-weight: bold;
  }

  .browser-title button {
    gap: 4px;
  }

  .browser-tools {
    display: flex;
    align-items: center;
    gap: 7px;
    height: 28px;
    padding: 0 4px 4px;
  }

  .browser-tools span {
    width: 1px;
    height: 18px;
    background: #777;
  }

  .tree {
    flex: 1;
    margin: 0;
    padding: 0;
    overflow: hidden;
    border: 1px solid #666;
    background: #fff;
    color: #000;
    font-family: 'DejaVu Sans Condensed', 'Liberation Sans', sans-serif;
    line-height: 15px;
    list-style: none;
  }

  .tree li {
    display: flex;
    align-items: center;
    gap: 2px;
    height: 18px;
  }

  .tree li span {
    padding-top: 1px;
  }

  .tree .root {
    padding-left: 5px;
  }

  .branch {
    margin-right: -2px;
  }

  .document-area {
    display: flex;
    flex: 1;
    flex-direction: column;
    min-width: 0;
    padding-right: 2px;
  }

  .canvas {
    position: relative;
    flex: 1;
    min-height: 0;
    background: linear-gradient(#2d2d2d, #a2a2a2);
  }

  .model {
    display: block;
    width: 100%;
    height: 100%;
  }

  .view-buttons {
    position: absolute;
    top: 6px;
    right: 2px;
    display: flex;
    gap: 8px;
  }

  .view-cube {
    position: absolute;
    top: 40px;
    right: 18px;
  }

  .nav-bar {
    position: absolute;
    top: 119px;
    right: 1px;
    display: flex;
    flex-direction: column;
    align-items: center;
    gap: 7px;
    width: 34px;
    height: 199px;
    padding: 2px;
    border: 2px solid #555;
    border-radius: 5px;
    background: #888;
  }

  .nav-bar .corner {
    align-self: flex-end;
  }

  .nav-bar button + button {
    margin-top: -1px;
  }

  .nav-bar .steering {
    margin: 2px 0 0;
  }

  .nav-bar .corner:last-child {
    margin-top: auto;
  }

  .nav-bar hr {
    width: 26px;
    margin: -3px 0 -2px;
    border: 0;
    border-top: 1px solid #666;
  }

  .triad {
    position: absolute;
    bottom: 31px;
    left: 23px;
  }

  .document-tabs {
    display: flex;
    height: 23px;
    padding-bottom: 1px;
    border-top: 2px solid #eee;
    background: linear-gradient(#e5e5e5, #bcbcbc);
    color: #111;
  }

  .layout {
    width: 20px;
    border: 1px solid #444;
    border-left-width: 0;
    background: #ddd;
  }

  .scroll-up {
    margin-bottom: 6px;
  }

  .tab-list {
    display: flex;
    flex: 1;
    min-width: 0;
    overflow: hidden;
    border-top: 1px solid #555;
  }

  .document-tab {
    align-items: stretch;
    height: 18px;
    background: #555;
    clip-path: polygon(0 0, 100% 0, 100% calc(100% - 5px), calc(100% - 5px) 100%, 5px 100%, 0 calc(100% - 5px));
  }

  .document-tab span {
    display: flex;
    align-items: center;
    gap: 6px;
    margin: 0 1px 1px 0;
    padding: 0 12px 0 8px;
    background: linear-gradient(#dedede, #c8c8c8);
    clip-path: polygon(0 0, 100% 0, 100% calc(100% - 5px), calc(100% - 5px) 100%, 5px 100%, 0 calc(100% - 5px));
  }

  .document-tab.active span {
    padding-right: 9px;
    background: #fff;
  }

  .document-tab svg {
    margin-bottom: 5px;
  }

  .next {
    width: 38px;
    border-top: 1px solid #555;
  }

  .status-bar {
    display: flex;
    align-items: center;
    height: 24px;
    border-bottom: 1px solid #666;
    background: linear-gradient(#fff, #d8d8d8 60%, #aaa);
    color: #000;
  }

  .status-bar span:first-child {
    flex: 1;
    padding-left: 1px;
  }

  .count {
    width: 39px;
    padding-left: 7px;
    border-left: 1px solid #ccc;
  }

  .taskbar {
    display: flex;
    align-items: center;
    gap: 2px;
    height: 30px;
    border-top: 1px solid #b9cbe0;
    background: linear-gradient(90deg, #7b8da5, #8495ab 56px, #a6c0dd 62px);
  }

  .start {
    align-items: flex-start;
    width: 57px;
    height: 29px;
    padding-right: 3px;
  }

  .start svg {
    margin-top: -5px;
  }

  .task {
    width: 44px;
    height: 29px;
  }

  .task.open {
    border: 1px solid #5e7895;
    border-radius: 3px;
    box-shadow: inset 0 0 0 1px #c9dcf0;
    background: linear-gradient(145deg, #c2d7ed, #9fbddd);
  }

  .task.current {
    background: linear-gradient(145deg, #f2f7fc, #cbdded);
  }

  .tray {
    display: flex;
    align-items: center;
    align-self: stretch;
    gap: 8px;
    margin-left: auto;
    padding-left: 38px;
    background: linear-gradient(90deg, #a6c0dd, #8193a9 32px);
    color: #fff;
  }

  .language {
    align-self: flex-start;
    margin: 5px 10px 0 0;
  }

  .network {
    margin-left: 6px;
  }

  .clock {
    margin: 0 7px 0 13px;
  }

  .show-desktop {
    width: 14px;
    height: 29px;
    border: 1px solid #444e5a;
    background: linear-gradient(135deg, #bcc5d0, #465565);
  }
</style>
